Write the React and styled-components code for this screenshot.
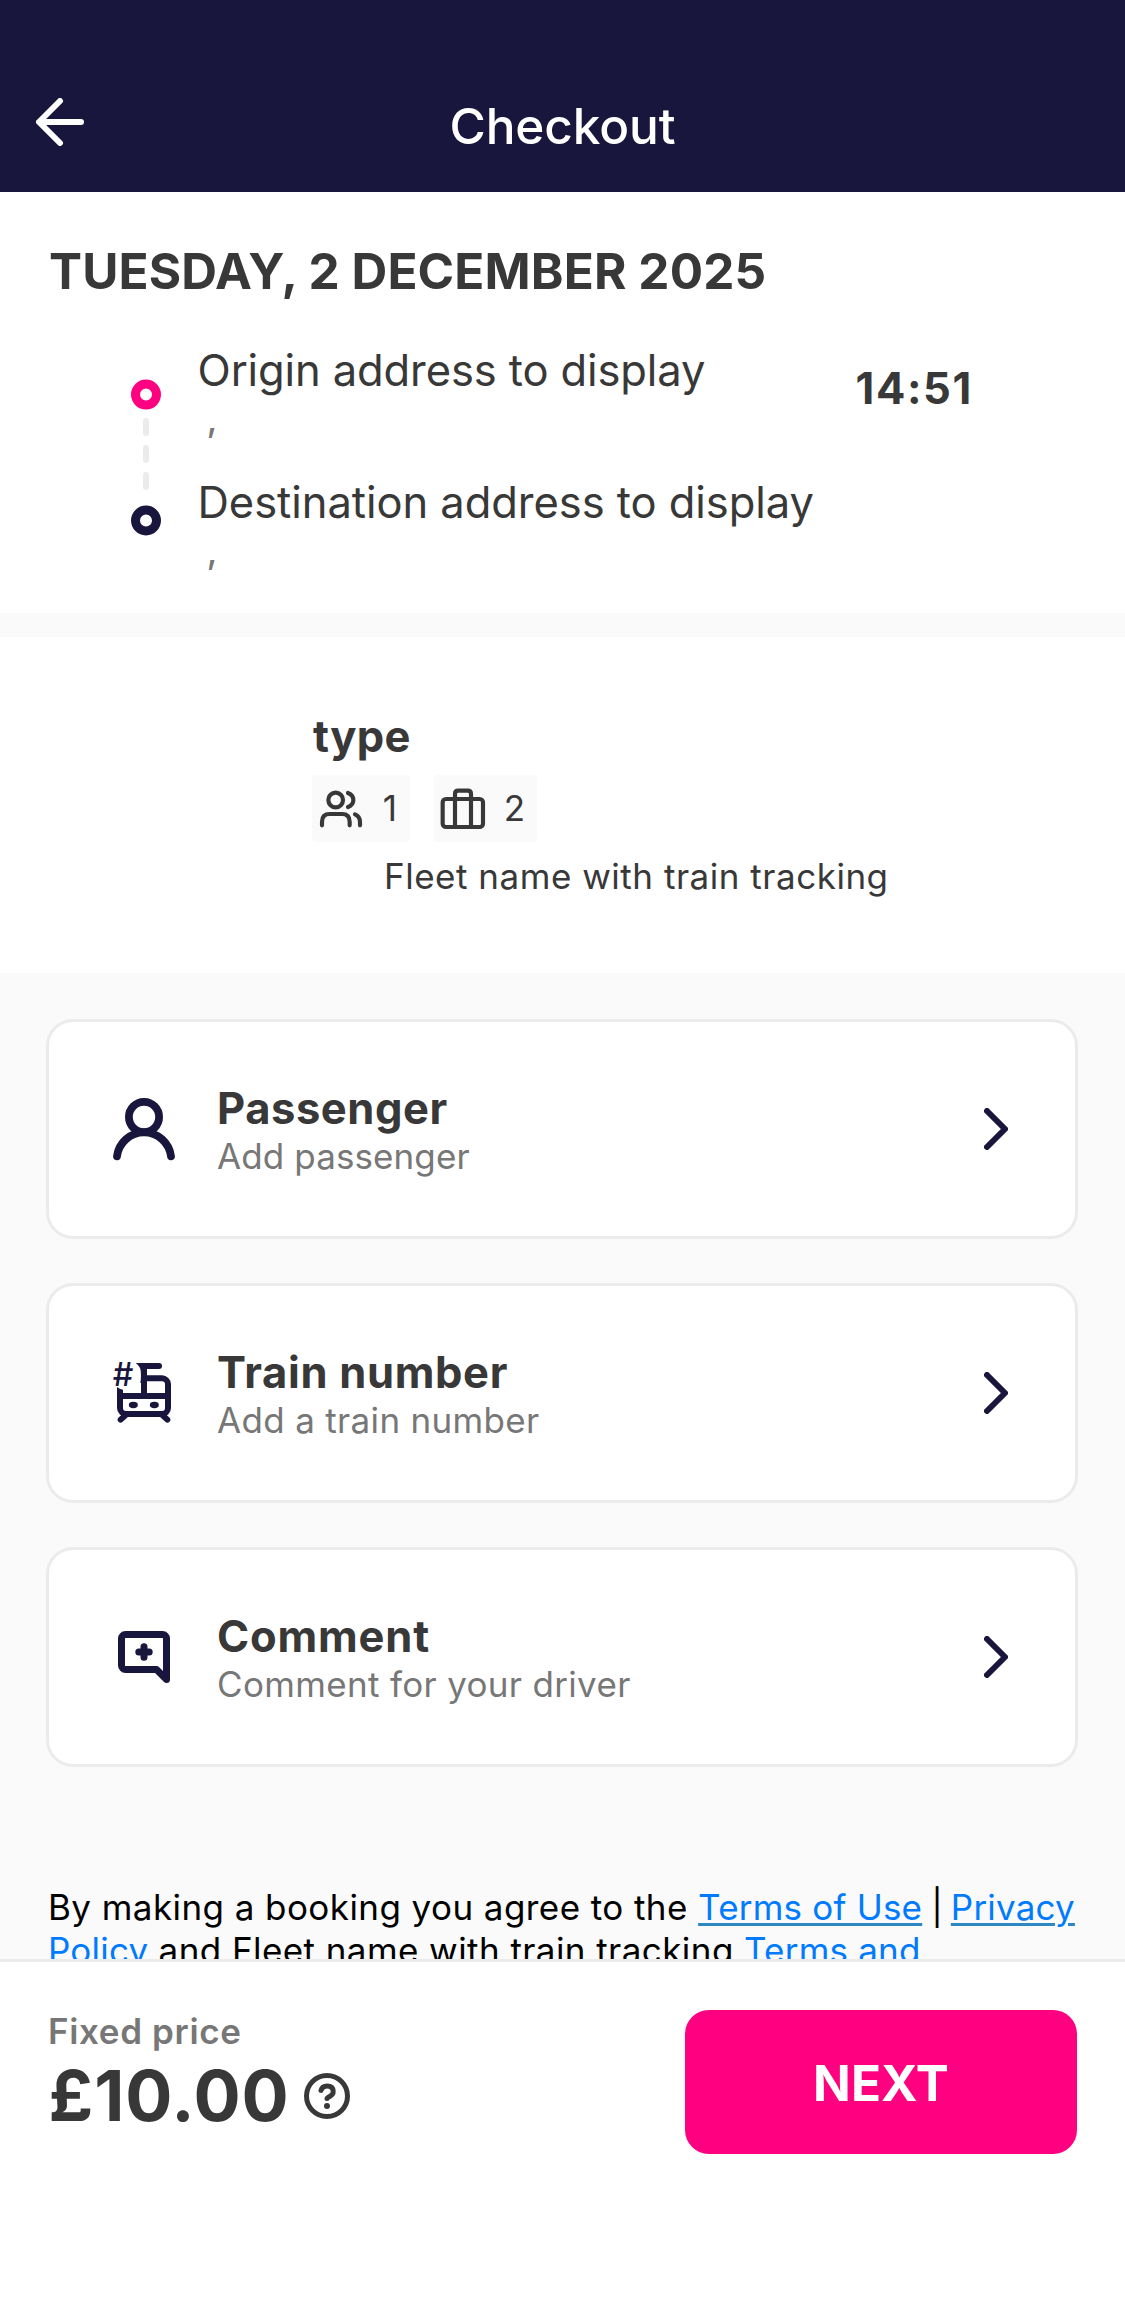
import React from "react";
import styled, { createGlobalStyle } from "styled-components";

const navy = "#18163c";
const pink = "#ff0080";
const ink = "#383838";
const muted = "#777777";
const line = "#ebebeb";
const surface = "#fafafa";

const GlobalStyle = createGlobalStyle`
  *, *::before, *::after { box-sizing: border-box; }
  body { margin: 0; background: #fff; }
  svg { display: block; flex: none; }
`;

const Screen = styled.div`
  display: flex;
  flex-direction: column;
  width: 1125px;
  height: 2304px;
  overflow: hidden;
  background: #fff;
  color: ${ink};
  font-family: Inter, "Liberation Sans", sans-serif;
`;

const Header = styled.header`
  flex: none;
  display: grid;
  grid-template-columns: 48px 1fr 48px;
  height: 192px;
  padding: 96px 36px 0;
  background: ${navy};
  color: #fff;
`;

const BackButton = styled.button`
  width: 48px;
  height: 48px;
  margin-top: 2px;
  padding: 0;
  border: 0;
  background: none;
  color: inherit;
`;

const Title = styled.h1`
  margin: 0;
  font-size: 49.5px;
  font-weight: 550;
  line-height: 60px;
  letter-spacing: -0.1px;
  text-align: center;
`;

const Content = styled.main`
  flex: 1;
  min-height: 0;
  overflow: hidden;
  background: ${surface};
`;

const Trip = styled.section`
  height: 421px;
  padding-top: 49px;
  background: #fff;
`;

const TripDate = styled.h2`
  margin: 0 0 0 49px;
  font-size: 49.5px;
  font-weight: 700;
  line-height: 60px;
  letter-spacing: 0.13px;
`;

const Route = styled.div`
  display: flex;
  align-items: flex-start;
  padding: 42px 0 0 131px;
`;

const Timeline = styled.svg`
  margin: 36px 36.5px 0 0;
`;

const Stops = styled.div`
  width: 658px;
`;

const Stop = styled.div`
  height: 132.3px;
`;

const StopName = styled.div`
  font-size: 43.5px;
  line-height: 54px;
  letter-spacing: ${(p) => p.$tracking}px;
`;

const StopDetail = styled.div`
  margin-top: 1px;
  color: ${muted};
  font-size: 35px;
  font-weight: 500;
  line-height: 42px;
  white-space: pre;
`;

const Time = styled.time`
  margin-top: 18px;
  font-size: 43.5px;
  font-weight: 700;
  line-height: 54px;
  letter-spacing: 1.62px;
`;

const Vehicle = styled.section`
  height: 336px;
  margin-top: 24px;
  padding: 72px 0 0 312px;
  background: #fff;
`;

const VehicleType = styled.h3`
  margin: 0 0 12px 1px;
  font-size: 43.5px;
  font-weight: 700;
  line-height: 54px;
  letter-spacing: 0.3px;
`;

const Chips = styled.div`
  display: flex;
  gap: 24px;
`;

const Chip = styled.div`
  display: flex;
  align-items: center;
  justify-content: space-between;
  width: ${(p) => p.$width}px;
  height: 67px;
  padding: 0 ${(p) => p.$end}px 0 6px;
  border-radius: 4px;
  background: ${surface};
  font-size: 35px;
  line-height: 42px;
`;

const ChipCount = styled.span`
  padding-bottom: 2px;
`;

const Fleet = styled.div`
  margin: 13px 0 0 72px;
  font-size: 35px;
  line-height: 42px;
  letter-spacing: 0.52px;
`;

const Options = styled.div`
  display: flex;
  flex-direction: column;
  gap: 44px;
  padding: 46px 47px 0 46px;
`;

const Option = styled.button`
  display: flex;
  align-items: center;
  width: 100%;
  height: 220px;
  padding: 0 67px 0 50px;
  border: 3px solid ${line};
  border-radius: 27px;
  background: #fff;
  color: ${ink};
  font-family: inherit;
  text-align: left;
`;

const OptionText = styled.span`
  flex: 1;
  display: flex;
  flex-direction: column;
  margin-left: 28px;
`;

const OptionTitle = styled.span`
  font-size: 43.5px;
  font-weight: 700;
  line-height: 54px;
  letter-spacing: ${(p) => p.$tracking}px;
`;

const OptionHint = styled.span`
  color: ${muted};
  font-size: 35px;
  line-height: 42px;
  letter-spacing: ${(p) => p.$tracking}px;
`;

const Legal = styled.p`
  margin: 119px 0 0 48px;
  color: #000;
  font-size: 35px;
  line-height: 43px;
  letter-spacing: 0.43px;
  white-space: nowrap;
`;

const LegalLink = styled.a`
  color: #007aff;
  letter-spacing: 0.2px;
  text-decoration: underline #2d87c3 3px;
  text-underline-offset: 3px;
`;

const Divider = styled.span`
  letter-spacing: -0.9px;
`;

const Footer = styled.footer`
  flex: none;
  display: flex;
  justify-content: space-between;
  align-items: flex-start;
  height: 345px;
  padding: 48px 48px 0;
  border-top: 3px solid ${line};
  background: #fff;
`;

const PriceLabel = styled.div`
  color: ${muted};
  font-size: 35px;
  font-weight: 600;
  line-height: 42px;
  letter-spacing: 0.63px;
`;

const Price = styled.div`
  display: flex;
  align-items: center;
  gap: 14px;
  margin: 2px 0 0 0.6px;
  font-size: 70px;
  font-weight: 700;
  line-height: 84px;
  letter-spacing: 0.87px;
`;

const NextButton = styled.button`
  width: 392px;
  height: 144px;
  padding: 2px 0 0;
  border: 0;
  border-radius: 24px;
  background: ${pink};
  color: #fff;
  font: 700 49.5px/60px Inter, "Liberation Sans", sans-serif;
  letter-spacing: 0.1px;
`;

const stroke = { fill: "none", stroke: "currentColor", strokeLinecap: "round", strokeLinejoin: "round" };

const BackArrow = () => (
  <svg width="48" height="48" viewBox="0 0 48 48" {...stroke} strokeWidth="6">
    <path d="M24 3 3 24l21 21M4 24h41" />
  </svg>
);

const RouteLine = () => (
  <Timeline width="30" height="157" viewBox="0 0 30 157" fill="none">
    <circle cx="15" cy="15.6" r="10.5" stroke={pink} strokeWidth="9" />
    <path d="M15 42v12M15 69v12M15 96v12" stroke={line} strokeWidth="6" strokeLinecap="round" />
    <circle cx="15" cy="141.5" r="10.5" stroke={navy} strokeWidth="9" />
  </Timeline>
);

const PeopleIcon = () => (
  <svg width="46" height="40" viewBox="54 69 138 120" {...stroke} strokeWidth="12.5">
    <circle cx="107" cy="102" r="22" />
    <path d="M144 81q16 6 16 21t-16 21" />
    <path d="M66 178v-11q0-23 23-23h37q23 0 23 23v11" />
    <path d="M165 145q15 6 15 23v10" />
  </svg>
);

const SuitcaseIcon = () => (
  <svg width="46" height="42" viewBox="417 66 138 126" {...stroke} strokeWidth="12.5">
    <rect x="425" y="99" width="121" height="84" rx="10" />
    <path d="M462 183V84q0-10 10-10h28q10 0 10 10v99" />
  </svg>
);

const PassengerIcon = () => (
  <svg width="90" height="90" viewBox="-45 -45 90 90" {...stroke} strokeWidth="7.8">
    <circle cy="-12" r="15.1" />
    <path d="M-27 27.3a27.2 27.2 0 0 1 54 0" />
  </svg>
);

const TrainIcon = () => (
  <svg width="90" height="90" viewBox="-3 -6 270 270" {...stroke} color={navy}>
    <text x="38" y="109" fill="currentColor" stroke="none" fontSize="97" fontWeight="500" fontFamily="Inter, sans-serif">#</text>
    <g strokeWidth="18">
      <path d="M132 48h45M132 48v90M132 85h54a18 18 0 0 1 18 18v71a18 18 0 0 1-18 18H78a18 18 0 0 1-18-18v-45M60 138h144" />
      <path d="M62 209l14-13M202 209l-14-13" />
    </g>
    <path d="M107 39h27v60h-13q3-14 1-38-3-14-15-22zM51 111q7 6 18 8v20H51z" fill="currentColor" stroke="none" />
    <g fill="currentColor" stroke="none">
      <ellipse cx="100" cy="165" rx="13.5" ry="9.5" />
      <ellipse cx="163" cy="165" rx="13.5" ry="9.5" />
    </g>
  </svg>
);

const CommentIcon = () => (
  <svg width="90" height="90" viewBox="-45 -45 90 90" {...stroke} strokeWidth="7">
    <path d="M12.5 12.5h-31a4 4 0 0 1-4-4v-27a4 4 0 0 1 4-4h37a4 4 0 0 1 4 4v41z" />
    <path d="M-5.2-5H5.2M0-10.2V.2" />
  </svg>
);

const Chevron = () => (
  <svg width="24" height="42" viewBox="0 0 24 42" {...stroke} stroke={navy} strokeWidth="6">
    <path d="M3 3l18 18L3 39" />
  </svg>
);

const HelpIcon = () => (
  <svg width="46" height="46" viewBox="0 0 46 46" {...stroke} strokeWidth="5">
    <circle cx="23" cy="23" r="20.5" />
    <path d="M17 17.4q1.200-4.400 6-4.400 6.200 0 6.200 5.400 0 3-3.200 4.800-3 1.600-3 2.300" />
    <circle cx="23" cy="33" r="3" fill="currentColor" stroke="none" />
  </svg>
);

const options = [
  { icon: PassengerIcon, title: "Passenger", tracking: 0.55, hint: "Add passenger", hintTracking: 0.1 },
  { icon: TrainIcon, title: "Train number", tracking: 0.67, hint: "Add a train number", hintTracking: 0.33 },
  { icon: CommentIcon, title: "Comment", tracking: 0.82, hint: "Comment for your driver", hintTracking: 0.33 },
];

const IconTint = styled.span`
  color: ${navy};
`;

export default function App() {
  return (
    <Screen>
      <GlobalStyle />
      <Header>
        <BackButton aria-label="Back">
          <BackArrow />
        </BackButton>
        <Title>Checkout</Title>
      </Header>
      <Content>
        <Trip>
          <TripDate>TUESDAY, 2 DECEMBER 2025</TripDate>
          <Route>
            <RouteLine />
            <Stops>
              <Stop>
                <StopName $tracking={-0.11}>Origin address to display</StopName>
                <StopDetail> ,</StopDetail>
              </Stop>
              <Stop>
                <StopName $tracking={-0.05}>Destination address to display</StopName>
                <StopDetail> ,</StopDetail>
              </Stop>
            </Stops>
            <Time>14:51</Time>
          </Route>
        </Trip>
        <Vehicle>
          <VehicleType>type</VehicleType>
          <Chips>
            <Chip $width={98} $end={13}>
              <PeopleIcon />
              <ChipCount>1</ChipCount>
            </Chip>
            <Chip $width={103} $end={12}>
              <SuitcaseIcon />
              <ChipCount>2</ChipCount>
            </Chip>
          </Chips>
          <Fleet>Fleet name with train tracking</Fleet>
        </Vehicle>
        <Options>
          {options.map(({ icon: Icon, title, tracking, hint, hintTracking }) => (
            <Option key={title}>
              <IconTint>
                <Icon />
              </IconTint>
              <OptionText>
                <OptionTitle $tracking={tracking}>{title}</OptionTitle>
                <OptionHint $tracking={hintTracking}>{hint}</OptionHint>
              </OptionText>
              <Chevron />
            </Option>
          ))}
        </Options>
        <Legal>
          By making a booking you agree to the <LegalLink>Terms of Use</LegalLink>
          <Divider> | </Divider>
          <LegalLink>
            Privacy
            <br />
            Policy
          </LegalLink>{" "}
          and Fleet name with train tracking <LegalLink>Terms and</LegalLink>
        </Legal>
      </Content>
      <Footer>
        <div>
          <PriceLabel>Fixed price</PriceLabel>
          <Price>
            £10.00
            <HelpIcon />
          </Price>
        </div>
        <NextButton>NEXT</NextButton>
      </Footer>
    </Screen>
  );
}
